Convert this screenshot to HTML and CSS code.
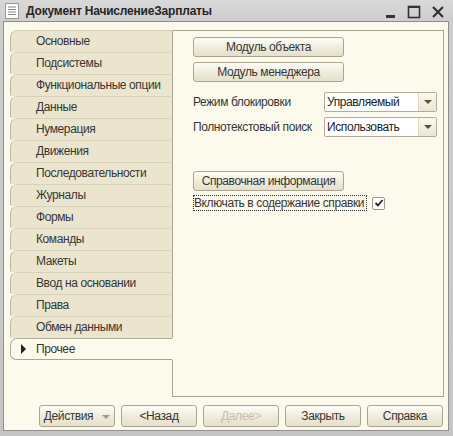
FILE: index.html
```html
<!DOCTYPE html>
<html lang="ru">
<head>
<meta charset="utf-8">
<link rel="stylesheet" href="styles.css">
</head>
<body>
<div class="window">
  <div class="titlebar">
    <svg class="doc-icon" width="14" height="16" viewBox="0 0 14 16">
      <rect x="0.5" y="0.5" width="13" height="15" fill="#fafafa" stroke="#9a9a9a"/>
      <line x1="3" y1="4" x2="11" y2="4" stroke="#8a8a8a"/>
      <line x1="3" y1="6.5" x2="11" y2="6.5" stroke="#8a8a8a"/>
      <line x1="3" y1="9" x2="11" y2="9" stroke="#8a8a8a"/>
      <line x1="3" y1="11.5" x2="11" y2="11.5" stroke="#8a8a8a"/>
    </svg>
    <div class="title">Документ НачислениеЗарплаты</div>
    <div class="controls">
      <svg width="12" height="14" viewBox="0 0 12 14"><rect x="1" y="10" width="9" height="3" fill="#333"/></svg>
      <svg width="14" height="14" viewBox="0 0 14 14"><rect x="1.5" y="1.5" width="11" height="11" fill="none" stroke="#333" stroke-width="1.6"/><rect x="1" y="1" width="12" height="2" fill="#333"/></svg>
      <svg width="14" height="14" viewBox="0 0 14 14"><path d="M2 2 L12 12 M12 2 L2 12" stroke="#333" stroke-width="2.2"/></svg>
    </div>
  </div>
  <div class="client">
    <div class="tabs-area">
      <div class="tablist">
        <div class="tab">Основные</div>
        <div class="tab">Подсистемы</div>
        <div class="tab">Функциональные опции</div>
        <div class="tab">Данные</div>
        <div class="tab">Нумерация</div>
        <div class="tab">Движения</div>
        <div class="tab">Последовательности</div>
        <div class="tab">Журналы</div>
        <div class="tab">Формы</div>
        <div class="tab">Команды</div>
        <div class="tab">Макеты</div>
        <div class="tab">Ввод на основании</div>
        <div class="tab">Права</div>
        <div class="tab">Обмен данными</div>
        <div class="tab active"><span class="marker"></span>Прочее</div>
        <div class="filler"></div>
      </div>
      <div class="panel">
        <button class="btn wide">Модуль объекта</button>
        <button class="btn wide">Модуль менеджера</button>
        <div class="field first">
          <span class="label">Режим блокировки</span>
          <div class="combo"><span class="combo-text">Управляемый</span><span class="combo-btn"><span class="tri"></span></span></div>
        </div>
        <div class="field">
          <span class="label">Полнотекстовый поиск</span>
          <div class="combo"><span class="combo-text">Использовать</span><span class="combo-btn"><span class="tri"></span></span></div>
        </div>
        <button class="btn wide help">Справочная информация</button>
        <div class="check-row">
          <span class="check-label">Включать в содержание справки</span>
          <span class="checkbox">
            <svg width="10" height="10" viewBox="0 0 10 10"><path d="M1.5 5 L4 7.5 L8.5 2" fill="none" stroke="#222" stroke-width="1.8"/></svg>
          </span>
        </div>
      </div>
    </div>
    <div class="footer">
      <button class="btn foot">Действия <span class="tri grey"></span></button>
      <button class="btn foot">&lt;Назад</button>
      <button class="btn foot disabled">Далее&gt;</button>
      <button class="btn foot">Закрыть</button>
      <button class="btn foot">Справка</button>
    </div>
  </div>
</div>
</body>
</html>
```

FILE: styles.css
```css
* { box-sizing: border-box; }
html, body { margin: 0; padding: 0; }
body {
  width: 453px;
  height: 436px;
  overflow: hidden;
  background: #c9c9c9;
  font-family: "Liberation Sans", Arial, sans-serif;
  font-size: 12px;
  letter-spacing: -0.4px;
  color: #363636;
}
.window {
  width: 453px;
  height: 436px;
  display: flex;
  flex-direction: column;
  background: linear-gradient(#d9d9d9, #cdcdcd 22px, #c6c6c6);
}
.titlebar {
  height: 21px;
  display: flex;
  align-items: center;
  padding: 0 8px 0 5px;
}
.doc-icon { flex: none; margin-top: 1px; }
.title {
  margin-left: 7px;
  font-weight: bold;
  font-size: 12px;
  color: #262626;
  flex: 1;
  letter-spacing: -0.2px;
}
.controls {
  display: flex;
  gap: 10px;
  align-items: center;
  margin-top: 2px;
}
.client {
  flex: 1;
  margin: 0 4px 5px 3px;
  border: 1px solid #8e8e8e;
  background: #fcfaec;
  display: flex;
  flex-direction: column;
  padding: 8px 4px 0 6px;
}
.tabs-area {
  display: flex;
  height: 367px;
}
.tablist {
  width: 163px;
  display: flex;
  flex-direction: column;
}
.tab {
  height: 22px;
  line-height: 21px;
  padding-left: 25px;
  background: #ebe5cf;
  border-left: 1px solid #bdb8a2;
  border-top: 1px solid #d8d2ba;
  border-right: 1px solid #a8a692;
  border-top-left-radius: 7px;
  border-bottom-left-radius: 2px;
  white-space: nowrap;
}
.tab.active {
  background: #fcfaec;
  border-top: 1px solid #b2ad98;
  border-bottom: 1px solid #a8a692;
  border-left: 1px solid #b2ad98;
  border-right: 1px solid #fcfaec;
  border-bottom-left-radius: 6px;
  padding-left: 10px;
}
.marker {
  display: inline-block;
  width: 0;
  height: 0;
  border-top: 5px solid transparent;
  border-bottom: 5px solid transparent;
  border-left: 5px solid #222;
  margin-right: 10px;
  vertical-align: -1px;
}
.filler {
  flex: 1;
  border-right: 1px solid #a8a692;
}
.panel {
  flex: 1;
  border: 1px solid #a8a692;
  border-left: none;
  padding: 6px 0 0 20px;
  display: flex;
  flex-direction: column;
  align-items: flex-start;
}
.btn {
  font-family: "Liberation Sans", Arial, sans-serif;
  font-size: 12px;
  letter-spacing: -0.4px;
  color: #363636;
  background: linear-gradient(#fefdf7, #efeadb 55%, #e6e0cb);
  border: 1px solid #aaa590;
  border-radius: 3px;
  padding: 0;
  height: 20px;
}
.wide { width: 151px; margin-bottom: 5px; }
.field {
  display: flex;
  align-items: center;
  height: 20px;
  margin-bottom: 5px;
}
.field.first { margin-top: 5px; }
.label { width: 131px; }
.combo {
  width: 113px;
  height: 20px;
  display: flex;
  background: #fff;
  border: 1px solid #b2ad98;
  border-radius: 2px;
}
.combo-text {
  flex: 1;
  padding-left: 2px;
  line-height: 18px;
  color: #222;
}
.combo-btn {
  width: 18px;
  border-left: 1px solid #ddd8c4;
  background: linear-gradient(#fbf9ef, #ebe6d3);
  display: flex;
  align-items: center;
  justify-content: center;
}
.tri {
  display: inline-block;
  width: 0;
  height: 0;
  border-left: 4px solid transparent;
  border-right: 4px solid transparent;
  border-top: 4px solid #5c5330;
}
.tri.grey { border-top-color: #9a9890; margin-left: 6px; vertical-align: 1px; }
.help { margin-top: 29px; margin-bottom: 4px; }
.check-row {
  display: flex;
  align-items: center;
  height: 16px;
}
.check-label {
  border: 1px dotted #333;
  line-height: 14px;
  white-space: nowrap;
  padding-right: 2px;
}
.checkbox {
  margin-left: 5px;
  width: 13px;
  height: 13px;
  border: 1px solid #9a9a9a;
  border-radius: 2px;
  background: #fff;
  display: flex;
  align-items: center;
  justify-content: center;
}
.footer {
  display: flex;
  gap: 6px;
  padding-left: 29px;
  margin-top: 8px;
}
.foot { width: 76px; height: 22px; }
.disabled { color: #c4c0ae; }
```
